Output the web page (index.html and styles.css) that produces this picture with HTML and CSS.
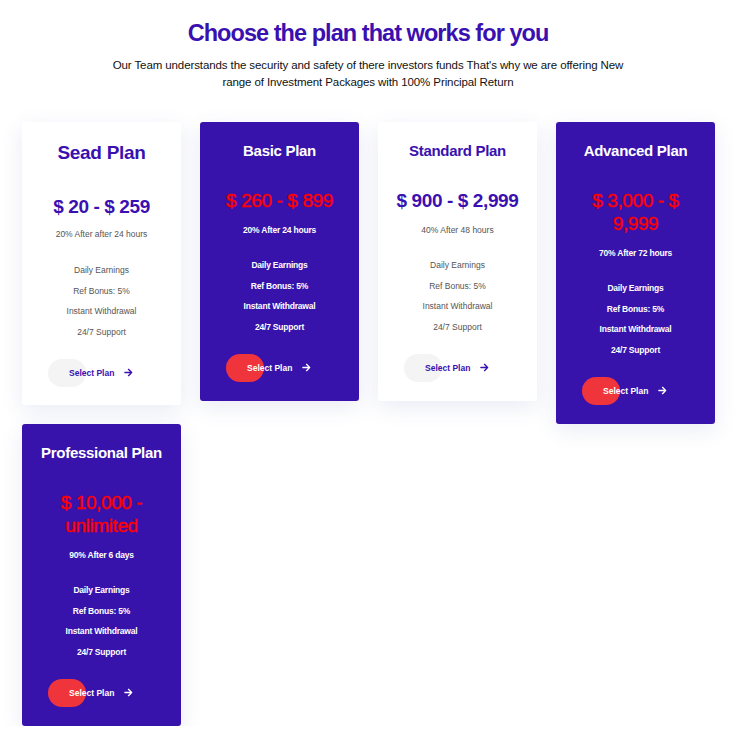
FILE: index.html
```html
<!DOCTYPE html>
<html lang="en">
<head>
<meta charset="utf-8">
<title>Plans</title>
<link rel="stylesheet" href="styles.css">
</head>
<body>
<section class="plans">
  <header class="plans-head">
    <h1 class="plans-title">Choose the plan that works for you</h1>
    <p class="plans-lead">Our Team understands the security and safety of there investors funds That's why we are offering New range of Investment Packages with 100% Principal Return</p>
  </header>
  <div class="plan-grid">
    <div class="card card-light card-first">
      <h2 class="card-title">Sead Plan</h2>
      <div class="card-price">$ 20 - $ 259</div>
      <div class="card-sub">20% After after 24 hours</div>
      <ul class="card-list">
        <li>Daily Earnings</li>
        <li>Ref Bonus: 5%</li>
        <li>Instant Withdrawal</li>
        <li>24/7 Support</li>
      </ul>
      <a class="card-btn" href="#"><span class="btn-label">Select Plan</span><svg class="btn-arrow" viewBox="0 0 10 10" width="9" height="9"><path d="M1 5h7.5M5 1.5L8.5 5 5 8.5" fill="none" stroke="currentColor" stroke-width="1.5" stroke-linecap="round" stroke-linejoin="round"/></svg></a>
    </div>
    <div class="card card-dark">
      <h2 class="card-title">Basic Plan</h2>
      <div class="card-price">$ 260 - $ 899</div>
      <div class="card-sub">20% After 24 hours</div>
      <ul class="card-list">
        <li>Daily Earnings</li>
        <li>Ref Bonus: 5%</li>
        <li>Instant Withdrawal</li>
        <li>24/7 Support</li>
      </ul>
      <a class="card-btn" href="#"><span class="btn-label">Select Plan</span><svg class="btn-arrow" viewBox="0 0 10 10" width="9" height="9"><path d="M1 5h7.5M5 1.5L8.5 5 5 8.5" fill="none" stroke="currentColor" stroke-width="1.5" stroke-linecap="round" stroke-linejoin="round"/></svg></a>
    </div>
    <div class="card card-light">
      <h2 class="card-title">Standard Plan</h2>
      <div class="card-price">$ 900 - $ 2,999</div>
      <div class="card-sub">40% After 48 hours</div>
      <ul class="card-list">
        <li>Daily Earnings</li>
        <li>Ref Bonus: 5%</li>
        <li>Instant Withdrawal</li>
        <li>24/7 Support</li>
      </ul>
      <a class="card-btn" href="#"><span class="btn-label">Select Plan</span><svg class="btn-arrow" viewBox="0 0 10 10" width="9" height="9"><path d="M1 5h7.5M5 1.5L8.5 5 5 8.5" fill="none" stroke="currentColor" stroke-width="1.5" stroke-linecap="round" stroke-linejoin="round"/></svg></a>
    </div>
    <div class="card card-dark">
      <h2 class="card-title">Advanced Plan</h2>
      <div class="card-price">$ 3,000 - $ 9,999</div>
      <div class="card-sub">70% After 72 hours</div>
      <ul class="card-list">
        <li>Daily Earnings</li>
        <li>Ref Bonus: 5%</li>
        <li>Instant Withdrawal</li>
        <li>24/7 Support</li>
      </ul>
      <a class="card-btn" href="#"><span class="btn-label">Select Plan</span><svg class="btn-arrow" viewBox="0 0 10 10" width="9" height="9"><path d="M1 5h7.5M5 1.5L8.5 5 5 8.5" fill="none" stroke="currentColor" stroke-width="1.5" stroke-linecap="round" stroke-linejoin="round"/></svg></a>
    </div>
    <div class="card card-dark">
      <h2 class="card-title">Professional Plan</h2>
      <div class="card-price">$ 10,000 - unlimited</div>
      <div class="card-sub">90% After 6 days</div>
      <ul class="card-list">
        <li>Daily Earnings</li>
        <li>Ref Bonus: 5%</li>
        <li>Instant Withdrawal</li>
        <li>24/7 Support</li>
      </ul>
      <a class="card-btn" href="#"><span class="btn-label">Select Plan</span><svg class="btn-arrow" viewBox="0 0 10 10" width="9" height="9"><path d="M1 5h7.5M5 1.5L8.5 5 5 8.5" fill="none" stroke="currentColor" stroke-width="1.5" stroke-linecap="round" stroke-linejoin="round"/></svg></a>
    </div>
  </div>
</section>
</body>
</html>
```
FILE: styles.css
```css
* { box-sizing: border-box; }
body {
  margin: 0;
  background: #fff;
  font-family: "Liberation Sans", Arial, sans-serif;
  color: #222;
}
.plans { padding: 19px 0 0; }
.plans-head { text-align: center; }
.plans-title {
  margin: 0;
  font-size: 23.5px;
  line-height: 29px;
  font-weight: 700;
  color: #3a10b0;
  letter-spacing: -0.95px;
}
.plans-lead {
  width: 530px;
  margin: 9px auto 0;
  font-size: 11.5px;
  line-height: 17px;
  color: #111;
  letter-spacing: -0.1px;
}
.plan-grid {
  display: flex;
  flex-wrap: wrap;
  align-items: flex-start;
  column-gap: 19px;
  row-gap: 0;
  padding: 31px 0 0 22px;
}
.card {
  width: 159px;
  padding: 17px 14px 19px;
  border-radius: 3px;
  text-align: center;
  box-shadow: 0 6px 22px rgba(60, 80, 160, 0.11);
}
.card-light { background: #fff; }
.card-dark { background: #3712ab; }
.card-title {
  margin: 0;
  font-size: 15px;
  line-height: 24px;
  font-weight: 700;
  letter-spacing: -0.3px;
}
.card-light .card-title { color: #3a10b0; }
.card-dark .card-title { color: #fff; }
.card-price {
  margin-top: 26px;
  font-size: 19px;
  line-height: 23px;
  letter-spacing: -0.4px;
}
.card-light .card-price { color: #3a10b0; font-weight: 700; }
.card-dark .card-price {
  color: #ff0000;
  font-weight: 400;
  -webkit-text-stroke: 0.4px #ff0000;
}
.card-sub {
  margin-top: 12px;
  font-size: 8.5px;
  line-height: 13px;
}
.card-light .card-sub { color: #555; }
.card-dark .card-sub { color: #fff; font-weight: 700; letter-spacing: -0.2px; }
.card-list {
  list-style: none;
  margin: 18px 0 0;
  padding: 0;
  font-size: 8.5px;
  line-height: 20.7px;
}
.card-light .card-list { color: #555; }
.card-dark .card-list { color: #fff; font-weight: 700; letter-spacing: -0.2px; }
.card-btn {
  position: relative;
  display: flex;
  align-items: center;
  width: max-content;
  height: 28px;
  margin: 16px 0 0 12px;
  padding-left: 21px;
  text-decoration: none;
  font-size: 8.5px;
  font-weight: 700;
}
.card-btn::before {
  content: "";
  position: absolute;
  left: 0;
  top: 0;
  width: 38px;
  height: 28px;
  border-radius: 14px;
}
.card-light .card-btn { color: #3a10b0; }
.card-light .card-btn::before { background: #f4f4f4; }
.card-dark .card-btn { color: #fff; }
.card-dark .card-btn::before { background: #f0343c; }
.btn-label { position: relative; }
.btn-arrow { position: relative; margin-left: 10px; }
.card-first { padding-bottom: 18px; }
.card-first .card-title { font-size: 19px; line-height: 28px; }
.card-first .card-price { margin-top: 28px; }
.card-first .card-sub { margin-top: 10px; }
.card-first .card-list { margin-top: 19px; }
.card-first .card-btn { margin-top: 16px; }
```
